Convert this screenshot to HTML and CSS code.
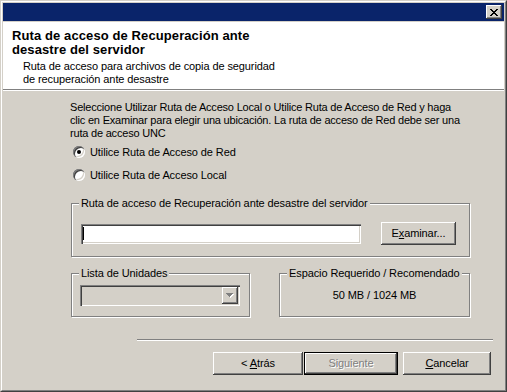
FILE: index.html
```html
<!DOCTYPE html>
<html lang="es">
<head>
<meta charset="utf-8">
<title>Ruta de acceso de Recuperación ante desastre del servidor</title>
<link rel="stylesheet" href="styles.css">
</head>
<body>
<div class="window">
  <div class="frame">
    <div class="titlebar">
      <div class="close">
        <svg class="x" width="8" height="7" viewBox="0 0 8 7" shape-rendering="crispEdges">
          <rect x="0" y="0" width="2" height="1"/><rect x="6" y="0" width="2" height="1"/>
          <rect x="1" y="1" width="2" height="1"/><rect x="5" y="1" width="2" height="1"/>
          <rect x="2" y="2" width="4" height="1"/>
          <rect x="3" y="3" width="2" height="1"/>
          <rect x="2" y="4" width="4" height="1"/>
          <rect x="1" y="5" width="2" height="1"/><rect x="5" y="5" width="2" height="1"/>
          <rect x="0" y="6" width="2" height="1"/><rect x="6" y="6" width="2" height="1"/>
        </svg>
      </div>
    </div>
    <div class="client">
      <div class="header">
        <div class="title">Ruta de acceso de Recuperación ante<br>desastre del servidor</div>
        <div class="subtitle">Ruta de acceso para archivos de copia de seguridad<br>de recuperación ante desastre</div>
      </div>
      <div class="hsep"></div>
      <div class="body">
        <p class="intro">Seleccione Utilizar Ruta de Acceso Local o Utilice Ruta de Acceso de Red y haga<br>clic en Examinar para elegir una ubicación. La ruta de acceso de Red debe ser una<br>ruta de acceso UNC</p>
        <div class="radios">
          <div class="radio-row"><span class="radio checked"></span><span class="rlabel">Utilice Ruta de Acceso de Red</span></div>
          <div class="radio-row"><span class="radio"></span><span class="rlabel">Utilice Ruta de Acceso Local</span></div>
        </div>
        <div class="group group-path">
          <div class="legend">Ruta de acceso de Recuperación ante desastre del servidor</div>
          <div class="path-row">
            <div class="textbox"><span class="caret"></span></div>
            <div class="btn btn-browse"><span>E<u>x</u>aminar...</span></div>
          </div>
        </div>
        <div class="row2">
          <div class="group group-drives">
            <div class="legend">Lista de Unidades</div>
            <div class="combo">
              <div class="combo-btn">
                <svg width="8" height="5" viewBox="0 0 8 5" shape-rendering="crispEdges">
                  <rect x="1" y="1" width="7" height="1" fill="#fff"/>
                  <rect x="2" y="2" width="5" height="1" fill="#fff"/>
                  <rect x="3" y="3" width="3" height="1" fill="#fff"/>
                  <rect x="4" y="4" width="1" height="1" fill="#fff"/>
                  <rect x="0" y="0" width="7" height="1" fill="#808080"/>
                  <rect x="1" y="1" width="5" height="1" fill="#808080"/>
                  <rect x="2" y="2" width="3" height="1" fill="#808080"/>
                  <rect x="3" y="3" width="1" height="1" fill="#808080"/>
                </svg>
              </div>
            </div>
          </div>
          <div class="group group-space">
            <div class="legend">Espacio Requerido / Recomendado</div>
            <div class="space-value">50 MB / 1024 MB</div>
          </div>
        </div>
      </div>
      <div class="footer">
        <div class="fsep"></div>
        <div class="buttons">
          <div class="btn btn-back"><span>&lt; <u>A</u>trás</span></div>
          <div class="btn btn-next"><span>Siguiente</span></div>
          <div class="btn btn-cancel"><span><u>C</u>ancelar</span></div>
        </div>
      </div>
    </div>
  </div>
</div>
</body>
</html>
```
FILE: styles.css
```css
* { box-sizing: border-box; }
html, body { margin: 0; padding: 0; }
body {
  width: 507px;
  height: 392px;
  background: #D4D0C8;
  color: #000;
  font-family: "Liberation Sans", Arial, sans-serif;
  font-size: 11px;
  line-height: 13px;
  letter-spacing: -0.1px;
  overflow: hidden;
}
.window {
  width: 507px;
  height: 392px;
  border: 1px solid;
  border-color: #D4D0C8 #404040 #404040 #D4D0C8;
  background: #D4D0C8;
}
.frame {
  height: 100%;
  border: 1px solid;
  border-color: #fff #808080 #808080 #fff;
  padding: 1px;
  display: flex;
  flex-direction: column;
}
.titlebar {
  flex: none;
  height: 18px;
  background: #0A246A;
  display: flex;
  justify-content: flex-end;
  align-items: center;
  padding-right: 2px;
}
.close {
  width: 16px;
  height: 14px;
  background: #D4D0C8;
  box-shadow: inset -1px -1px #404040, inset 1px 1px #fff, inset -2px -2px #808080;
  padding: 4px 0 0 4px;
}
.close .x { display: block; fill: #000; }
.client {
  flex: 1;
  margin-top: 1px;
  display: flex;
  flex-direction: column;
}
.header {
  flex: none;
  height: 67px;
  background: #fff;
  padding: 7px 0 0 9px;
}
.title {
  font-weight: bold;
  font-size: 13px;
  line-height: 14px;
  letter-spacing: 0.1px;
}
.subtitle {
  margin: 3px 0 0 11px;
}
.hsep {
  flex: none;
  height: 2px;
  border-top: 1px solid #808080;
  border-bottom: 1px solid #fff;
}
.body {
  flex: 1;
  padding: 10px 0 0 67px;
}
.intro { margin: 0; white-space: nowrap; letter-spacing: -0.2px; }
.radios { margin-top: 3px; }
.radio-row {
  height: 18px;
  display: flex;
  align-items: center;
}
.radio-row + .radio-row { margin-top: 5px; }
.radio {
  width: 12px;
  height: 12px;
  margin-left: 3px;
  border-radius: 50%;
  background: #fff;
  box-shadow: inset 1px 1px 0 #808080, inset 2px 2px 0 #404040, inset -1px -1px 0 #fff, inset -2px -2px 0 #D4D0C8;
  display: flex;
  align-items: center;
  justify-content: center;
}
.radio.checked::after {
  content: "";
  width: 4px;
  height: 4px;
  border-radius: 50%;
  background: #000;
}
.rlabel { margin-left: 5px; }
.group {
  border: 1px solid #808080;
  box-shadow: inset 1px 1px #fff, 1px 1px #fff;
}
.legend {
  width: fit-content;
  margin: -7px 0 0 7px;
  padding: 0 2px;
  background: #D4D0C8;
  line-height: 13px;
  white-space: nowrap;
}
.group-path {
  margin: 19px 0 0 1px;
  width: 399px;
  height: 54px;
}
.path-row {
  display: flex;
  align-items: center;
  margin: 12px 0 0 9px;
}
.textbox {
  width: 280px;
  height: 20px;
  background: #fff;
  box-shadow: inset 1px 1px #808080, inset 2px 2px #404040, inset -1px -1px #fff, inset -2px -2px #D4D0C8;
  padding: 3px 0 0 2px;
  margin-right: 20px;
}
.caret { display: block; width: 1px; height: 13px; background: #000; }
.btn {
  height: 23px;
  background: #D4D0C8;
  box-shadow: inset -1px -1px #404040, inset 1px 1px #fff, inset -2px -2px #808080;
  display: flex;
  align-items: center;
  justify-content: center;
  white-space: nowrap;
}
.btn-browse { width: 75px; }
.row2 {
  display: flex;
  margin: 16px 0 0 1px;
  width: 399px;
}
.group-drives { width: 179px; height: 44px; }
.group-space { width: 191px; height: 44px; margin-left: auto; }
.combo {
  width: 160px;
  height: 21px;
  margin: 5px 0 0 8px;
  background: #D4D0C8;
  box-shadow: inset 1px 1px #808080, inset 2px 2px #404040, inset -1px -1px #fff, inset -2px -2px #D4D0C8;
  display: flex;
  justify-content: flex-end;
  padding: 2px;
}
.combo-btn {
  width: 16px;
  height: 17px;
  background: #D4D0C8;
  box-shadow: inset -1px -1px #404040, inset 1px 1px #fff, inset -2px -2px #808080;
  display: flex;
  align-items: center;
  justify-content: center;
}
.combo-btn svg { display: block; }
.space-value {
  margin-top: 9px;
  text-align: center;
}
.footer {
  flex: none;
  height: 50px;
}
.fsep {
  height: 2px;
  margin: 0 11px 0 134px;
  border-top: 1px solid #808080;
  border-bottom: 1px solid #fff;
}
.buttons {
  display: flex;
  justify-content: flex-end;
  margin: 11px 13px 0 0;
}
.btn-back { width: 90px; margin-right: 1px; }
.btn-next {
  width: 94px;
  margin-right: 5px;
  border: 1px solid #000;
  color: #808080;
  text-shadow: 1px 1px 0 #fff;
}
.btn-cancel { width: 88px; }
u { text-decoration: underline; text-underline-offset: 1px; }
```
